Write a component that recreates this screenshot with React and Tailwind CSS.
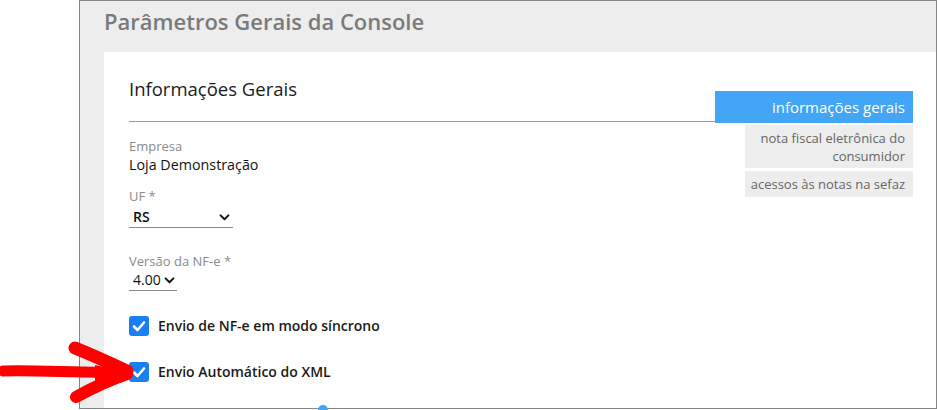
import React from "react";

function Chevron({ className = "" }) {
  return (
    <svg viewBox="0 0 12 8" className={className} width="11" height="7">
      <path d="M1.5 1.5 L6 6 L10.5 1.5" fill="none" stroke="#111" strokeWidth="2.2" strokeLinecap="round" strokeLinejoin="round" />
    </svg>
  );
}

function Check() {
  return (
    <div className="w-[20px] h-[20px] rounded-[3px] bg-[#1a7ff0] flex items-center justify-center shrink-0">
      <svg viewBox="0 0 20 20" width="20" height="20">
        <path d="M5 10.5 L8.5 14 L15 6.5" fill="none" stroke="#fff" strokeWidth="2.6" strokeLinecap="round" strokeLinejoin="round" />
      </svg>
    </div>
  );
}

export default function App() {
  return (
    <div className="w-[937px] h-[410px] bg-white relative overflow-hidden" style={{ fontFamily: '"Open Sans", "Noto Sans", sans-serif' }}>
      <div className="ml-[79px] w-[858px] h-[409px] border border-[#858585] bg-[#ededed] flex flex-col">
        <div className="h-[51px] pl-[24px] pt-[5px]">
          <h1 className="text-[22px] leading-[30px] font-semibold text-[#7a7a7a]">Parâmetros Gerais da Console</h1>
        </div>
        <div className="ml-[24px] flex-1 bg-white flex pl-[25px] pr-[22px]">
          <div className="w-[586px] flex flex-col">
            <div className="pt-[25px] pb-[20px] border-b border-[#9a9a9a]">
              <h2 className="text-[18.5px] leading-[24px] text-[#1a1a1a]">Informações Gerais</h2>
            </div>
            <div className="mt-[15px] text-[13px] leading-[18px] text-[#8a8a8a]">Empresa</div>
            <div className="text-[14.3px] leading-[20px] text-[#111]">Loja Demonstração</div>
            <div className="mt-[12px] text-[13px] leading-[18px] text-[#8a8a8a]">UF *</div>
            <div className="mt-[2px] w-[104px] h-[21px] border-b border-[#8a8a8a] flex items-start justify-between pl-[4px] pr-[3px]">
              <span className="text-[14px] leading-[20px] font-semibold text-[#111]">RS</span>
              <Chevron className="mt-[7px]" />
            </div>
            <div className="mt-[24px] text-[13px] leading-[18px] text-[#8a8a8a]">Versão da NF-e *</div>
            <div className="w-[48px] h-[21px] border-b border-[#8a8a8a] flex items-start pl-[4px] gap-[3px]">
              <span className="text-[14px] leading-[20px] text-[#111]">4.00</span>
              <Chevron className="mt-[7px]" />
            </div>
            <div className="mt-[25px] flex items-center gap-[9px] h-[20px]">
              <Check />
              <span className="text-[14px] leading-[20px] font-semibold text-[#1a1a1a]">Envio de NF-e em modo síncrono</span>
            </div>
            <div className="mt-[26px] flex items-center gap-[9px] h-[20px]">
              <Check />
              <span className="text-[14px] leading-[20px] font-semibold text-[#1a1a1a]">Envio Automático do XML</span>
            </div>
            <div className="relative">
              <div className="absolute left-[189px] top-[23px] w-[10px] h-[6px] rounded-t-full bg-[#42a5f5]" />
            </div>
          </div>
          <div className="w-[198px] mt-[39px] flex flex-col">
            <div className="h-[32px] bg-[#42a5f5] flex items-center justify-end pr-[8px] text-[15px] text-white">informações gerais</div>
            <div className="ml-[30px] mt-[2px] bg-[#ededed] pt-[4px] pb-[3px] pr-[8px] text-right text-[13px] leading-[18px] text-[#666]">nota fiscal eletrônica do<br />consumidor</div>
            <div className="ml-[30px] mt-[3px] bg-[#ededed] py-[4px] pr-[8px] text-right text-[13px] leading-[18px] text-[#666]">acessos às notas na sefaz</div>
          </div>
        </div>
      </div>
      <svg className="absolute left-0 top-[340px]" width="135" height="65" viewBox="0 340 135 65">
        <path d="M3 371 C 40 370, 80 373, 118 372" fill="none" stroke="#ff0000" strokeWidth="11" strokeLinecap="round" />
        <path d="M75 348 C 95 356, 112 364, 127 371" fill="none" stroke="#ff0000" strokeWidth="13" strokeLinecap="round" />
        <path d="M76 397 C 92 388, 110 380, 127 374" fill="none" stroke="#ff0000" strokeWidth="12" strokeLinecap="round" />
        <path d="M95 365 L128 372 L95 381 Z" fill="#ff0000" />
      </svg>
    </div>
  );
}
